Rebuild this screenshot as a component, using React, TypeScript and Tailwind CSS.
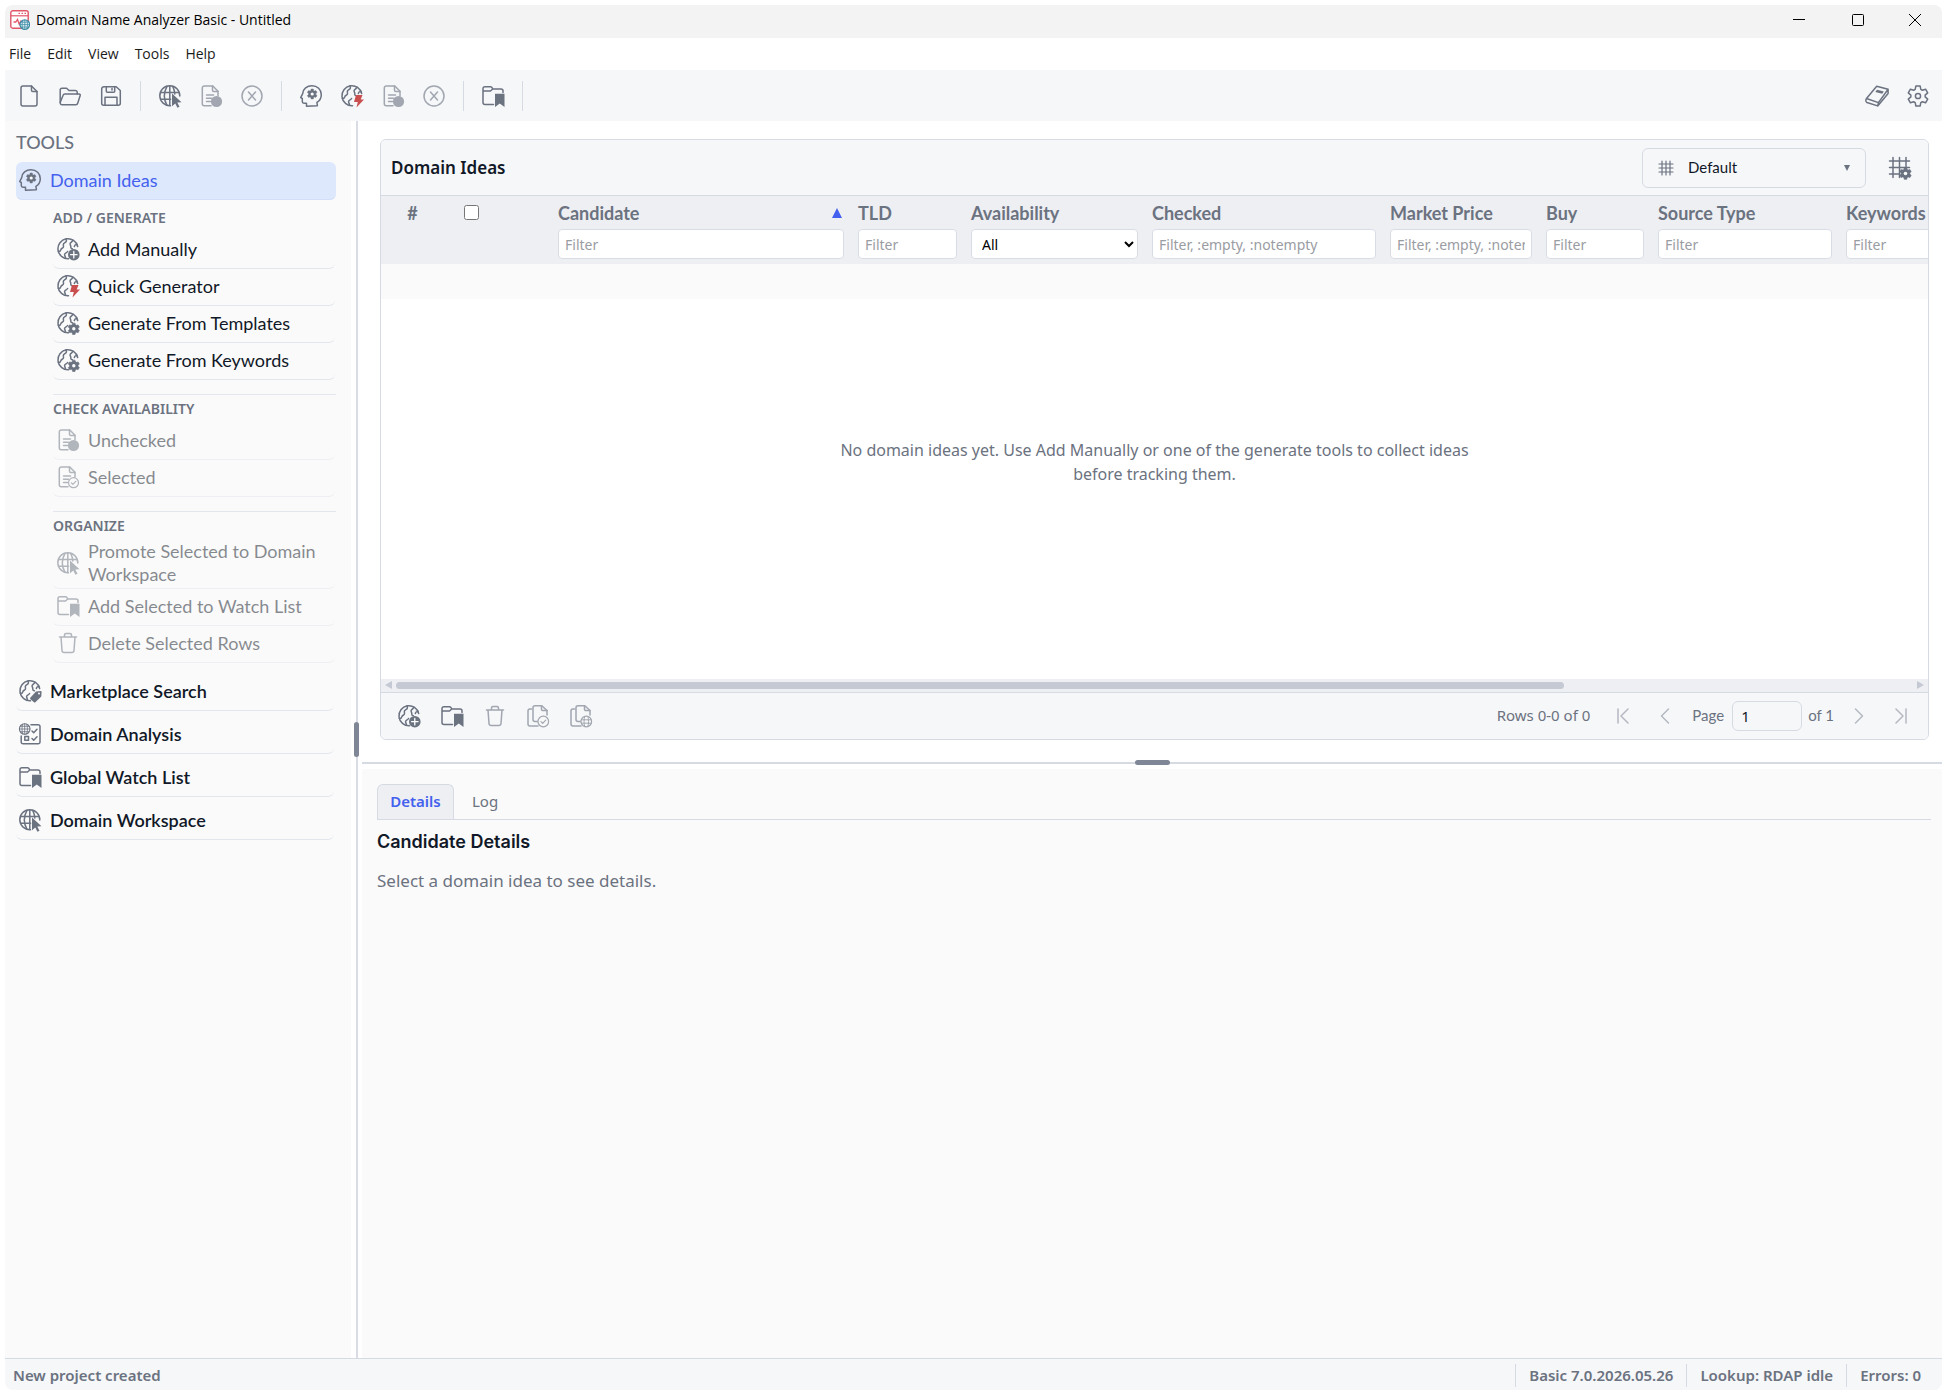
import React from "react";

type IconProps = { className?: string; size?: string };
type IconType = (props: IconProps) => React.JSX.Element;

// six-toothed gear outline around (cx, cy)
const gearPath = (cx: number, cy: number, outer: number, inner: number): string => {
  const points: string[] = [];
  for (let i = 0; i < 6; i++) {
    const mid = i * 60 - 90;
    const corners = [
      [mid - 23, inner],
      [mid - 12, outer],
      [mid + 12, outer],
      [mid + 23, inner],
    ];
    corners.forEach(([deg, r]) => {
      const a = (deg * Math.PI) / 180;
      points.push(`${(cx + r * Math.cos(a)).toFixed(2)} ${(cy + r * Math.sin(a)).toFixed(2)}`);
    });
  }
  return `M${points.join("L")}Z`;
};

const Svg = ({ className = "", size = "size-6", children }: IconProps & { children: React.ReactNode }) => (
  <svg
    viewBox="0 0 24 24"
    fill="none"
    stroke="currentColor"
    strokeWidth="1.5"
    strokeLinecap="round"
    strokeLinejoin="round"
    aria-hidden="true"
    className={`shrink-0 ${size} ${className}`}
  >
    {children}
  </svg>
);

const NewIcon: IconType = (p) => (
  <Svg {...p}>
    <path d="M6 2h8.500L20 7.500V20a2 2 0 0 1-2 2H6a2 2 0 0 1-2-2V4a2 2 0 0 1 2-2Z" />
    <path d="M14.500 2v4.200a1.300 1.300 0 0 0 1.300 1.300H20" />
  </Svg>
);

const OpenIcon: IconType = (p) => (
  <Svg {...p}>
    <path d="M2.200 18.500V6a1.800 1.800 0 0 1 1.800-1.800h4.600l2.400 2.300h6.400A1.800 1.800 0 0 1 19.200 8.300V10" />
    <path d="M6.800 10h14.300a1.200 1.200 0 0 1 1.100 1.600l-2.500 7.700a2 2 0 0 1-1.900 1.500H4.200a2 2 0 0 1-1.900-2.600l2.800-6.900A1.900 1.900 0 0 1 6.800 10Z" />
  </Svg>
);

const SaveIcon: IconType = (p) => (
  <Svg {...p}>
    <path d="M5 2.700h12.200L21.300 6.500V19.300a2 2 0 0 1-2 2H4.700a2 2 0 0 1-2-2V5A2.300 2.300 0 0 1 5 2.700Z" />
    <path d="M7.300 2.700v4.600a1 1 0 0 0 1 1h6.400a1 1 0 0 0 1-1V2.700M13 4.500v1.500M6 21.300v-8h12v8" />
  </Svg>
);

const GlobeCursorIcon: IconType = (p) => (
  <Svg {...p}>
    <path d="M12.500 21.700A10 10 0 1 1 21.800 12" />
    <path d="M2.600 8.500h18.200M2.600 15.300h10M11.800 1.800v19.800M9 2.300c-3.400 6-3.400 13 0 19M14.700 2.300c1.300 2.500 2 5 2.100 7.700" />
    <path d="M14 9.500l9.500 8.700-4.200.3 2.200 4.300-2.100 1-2.100-4.300L14 22.300Z" fill="currentColor" stroke="none" />
  </Svg>
);

const PageLines = () => (
  <>
    <path d="M12 21.800H5.300a2 2 0 0 1-2-2V4a2 2 0 0 1 2-2h8.500L19 7.300V12" />
    <path d="M13.500 2v4.200a1.300 1.300 0 0 0 1.300 1.300H19M7.500 11h7M7.500 14.300h5M7.500 17.600h4" />
  </>
);

const PageDotIcon: IconType = (p) => (
  <Svg {...p}>
    <PageLines />
    <circle cx="17.500" cy="17.500" r="5.600" fill="currentColor" stroke="none" />
  </Svg>
);

const PageCheckIcon: IconType = (p) => (
  <Svg {...p}>
    <PageLines />
    <circle cx="17.500" cy="17.700" r="5" className="fill-neutral-50" strokeWidth="1.200" />
    <path d="M15.300 17.800l1.600 1.600 2.900-3" strokeWidth="1.200" />
  </Svg>
);

const CancelIcon: IconType = (p) => (
  <Svg {...p}>
    <circle cx="12" cy="12" r="10" />
    <path d="M8.500 8l7 8M15.500 8l-7 8" />
  </Svg>
);

const HeadIcon: IconType = (p) => (
  <Svg {...p}>
    <path d="M7.500 22.300v-3H5a1.700 1.700 0 0 1-1.700-1.700v-3.100L1.700 13.600l2-4C4 4.800 8 1.700 13 1.700c5.400 0 9.300 3.900 9.300 9 0 3.600-1.800 6.100-4.400 7.700l.5 3.300Z" />
    <path d={gearPath(13.2, 10, 5, 3.6)} fill="currentColor" strokeWidth=".6" />
    <circle cx="13.200" cy="10" r="1.600" className="fill-neutral-50" stroke="none" />
  </Svg>
);

const EarthLines = () => (
  <>
    <path d="M12.500 21.700A10 10 0 1 1 21.700 9.500" />
    <path d="M2.300 14.500c1.600.2 2.300-.6 2.600-1.900s1.700-1.200 2.400-2.200-.5-2.600.3-3.700 2.300-1.200 2.700-2.500-.3-1.600-.3-2.200" />
    <path d="M9.300 21.300c.5-1.800-.9-2.400-.7-3.900s2.300-1.500 3-2.900" />
    <path d="M16.800 3.200c-.3 1.600-2 1.900-2.600 3.200s.8 2 .6 3.400.8 2 1.600 2M21 7.500c-1.500-.2-2.400.6-2.700 2" />
  </>
);

const EarthPlusIcon: IconType = (p) => (
  <Svg {...p}>
    <EarthLines />
    <circle cx="17.800" cy="17.700" r="5.800" fill="currentColor" stroke="none" />
    <path d="M17.800 14.500v6.400M14.600 17.700H21" stroke="#fff" strokeWidth="1.300" />
  </Svg>
);

const EarthBoltIcon: IconType = (p) => (
  <Svg {...p}>
    <EarthLines />
    <path d="M16 11h6.500l-1.800 4.500H24l-7.500 8 1.300-5.500h-3.800Z" fill="#c94f4f" stroke="none" />
  </Svg>
);

const EarthGearIcon: IconType = (p) => (
  <Svg {...p}>
    <EarthLines />
    <path d={gearPath(17.8, 17.8, 5.8, 4.3)} fill="currentColor" strokeWidth=".6" />
    <circle cx="17.800" cy="17.800" r="1.700" className="fill-neutral-50" stroke="none" />
  </Svg>
);

const EarthTagIcon: IconType = (p) => (
  <Svg {...p}>
    <EarthLines />
    <path d="M12.500 18.500l5.500-6 4.600-.6a1 1 0 0 1 1 1l-.3 4.600-5.700 5.500a1.300 1.300 0 0 1-1.900 0l-3.200-2.700a1.300 1.300 0 0 1 0-1.800Z" fill="currentColor" stroke="none" />
    <circle cx="21" cy="14.500" r="1" className="fill-neutral-50" stroke="none" />
  </Svg>
);

const FolderMarkIcon: IconType = (p) => (
  <Svg {...p}>
    <path d="M12.500 20.500H4a2 2 0 0 1-2-2V4.500A1.800 1.800 0 0 1 3.800 2.700h5.700a1.800 1.800 0 0 1 1.700 1.200l.5 1.100H20a2 2 0 0 1 2 2v1.500M2 7h7.500l2.200-2" />
    <path d="M14 9.800h9.500V23l-4.700-3.500L14 23Z" fill="currentColor" stroke="none" />
  </Svg>
);

const ChecklistIcon: IconType = (p) => (
  <Svg {...p}>
    <path d="M13 2.800h7.200a1.800 1.800 0 0 1 1.800 1.800V20a1.800 1.800 0 0 1-1.800 1.800H5A1.800 1.800 0 0 1 3.200 20v-6" />
    <path d="M14 9l1.700 1.700 3.300-3.400M14 16.500l1.700 1.700 3.300-3.400M6.800 14.500h3.700v3.700H6.800Z" />
    <circle cx="6.700" cy="7" r="5.300" strokeWidth="1.100" />
    <path d="M1.500 7h10.400M6.700 1.700v10.600M4.700 2.200c-1 3-1 6.600 0 9.600M8.700 2.200c1 3 1 6.600 0 9.600M2.500 4.300h8.400M2.500 9.700h8.400" strokeWidth=".8" />
  </Svg>
);

const TrashIcon: IconType = (p) => (
  <Svg {...p}>
    <path d="M3.500 6h17M8.500 6V4a1.600 1.600 0 0 1 1.600-1.600h3.800A1.600 1.600 0 0 1 15.500 4v2M5 6l1 13.500a2.200 2.200 0 0 0 2.200 2h7.600a2.200 2.200 0 0 0 2.200-2L19 6" />
  </Svg>
);

const CopyLines = () => (
  <>
    <path d="M5.500 5H4a2 2 0 0 0-2 2v13a2 2 0 0 0 2 2h8M12 17.500H9a2 2 0 0 1-2-2V3.700a2 2 0 0 1 2-2h6.800L21 6.500V11" />
    <path d="M15.500 1.700v3.500a1.300 1.300 0 0 0 1.300 1.300H21" />
  </>
);

const CopyCheckIcon: IconType = (p) => (
  <Svg {...p}>
    <CopyLines />
    <circle cx="17.300" cy="17.500" r="5.300" className="fill-neutral-50" strokeWidth="1.200" />
    <path d="M15 17.600l1.700 1.700 3-3.100" strokeWidth="1.200" />
  </Svg>
);

const CopyGlobeIcon: IconType = (p) => (
  <Svg {...p}>
    <CopyLines />
    <circle cx="17.300" cy="17.500" r="5.300" className="fill-neutral-50" strokeWidth="1.200" />
    <path d="M12.500 15.800h9.600M12.500 19.200h9.600M15.700 12.500c-.9 3-.9 7 0 10M18.900 12.500c.9 3 .9 7 0 10" strokeWidth="1" />
  </Svg>
);

const BookIcon: IconType = (p) => (
  <Svg {...p}>
    <path d="M1.500 14.500L11.700 2.200l11.400 3.100L13.400 18.600 1.500 14.500Zm0 0c-1 1.500-.9 3.300.4 4l10.800 3.400 10.400-12.500V5.300M13.400 18.600l-.7 3.300" />
    <path d="M12 5.800l6.800 1.700-1.600 2.300-6.900-1.700Z" fill="currentColor" stroke="none" />
  </Svg>
);

const GearIcon: IconType = (p) => (
  <Svg {...p}>
    <path d={gearPath(12, 12, 10.2, 7.2)} />
    <circle cx="12" cy="12" r="2.600" />
  </Svg>
);

const GridIcon: IconType = (p) => (
  <Svg {...p}>
    <path d="M6 1.500v21M12 1.500v21M18 1.500v21M1.500 6h21M1.500 12h21M1.500 18h21" strokeWidth="1.800" />
  </Svg>
);

const GridGearIcon: IconType = (p) => (
  <Svg {...p}>
    <path d="M5 1.500v20M11.500 1.500v20M18 1.500v9M1.500 5h20M1.500 11.500h20M1.500 18H11" />
    <path d={gearPath(17.5, 17.5, 6, 4.3)} fill="currentColor" strokeWidth=".6" />
    <circle cx="17.500" cy="17.500" r="1.800" className="fill-neutral-50" stroke="none" />
  </Svg>
);

const FirstIcon: IconType = (p) => (
  <Svg {...p}>
    <path d="M7 5v14M17 5l-7 7 7 7" />
  </Svg>
);
const PrevIcon: IconType = (p) => (
  <Svg {...p}>
    <path d="M15.500 5l-7 7 7 7" />
  </Svg>
);
const NextIcon: IconType = (p) => (
  <Svg {...p}>
    <path d="M8.500 5l7 7-7 7" />
  </Svg>
);
const LastIcon: IconType = (p) => (
  <Svg {...p}>
    <path d="M17 5v14M7 5l7 7-7 7" />
  </Svg>
);

const AppLogo = () => (
  <svg viewBox="0 0 20 20" fill="none" aria-hidden="true" className="size-5 shrink-0">
    <rect x=".8" y=".8" width="17.400" height="17.400" rx="2" fill="#fff" stroke="#e2566a" strokeWidth="1.400" />
    <path d="M1 5.800h17" stroke="#e2566a" strokeWidth="1.200" />
    <path d="M8.500 3.400h1.500M11.500 3.400H13M14.500 3.400H16" stroke="#e2566a" strokeWidth="1.300" />
    <path d="M3.500 12h2.300l1.700-2.500 1.800 5 1.700-4" stroke="#e2566a" strokeWidth="1.300" />
    <circle cx="14.800" cy="14.600" r="4.800" fill="#e3f2f6" stroke="#3f8ca6" strokeWidth="1.200" />
    <path d="M10 14.600h9.600M14.800 9.800v9.600M12.800 10.300c-.9 2.600-.9 6 0 8.600M16.800 10.300c.9 2.600.9 6 0 8.600M11 12.200h7.600M11 17h7.600" stroke="#3f8ca6" strokeWidth=".8" />
  </svg>
);

type Tool = { label: string; icon: IconType; disabled?: boolean };

const toolbarGroups: Tool[][] = [
  [
    { label: "New", icon: NewIcon },
    { label: "Open", icon: OpenIcon },
    { label: "Save", icon: SaveIcon },
  ],
  [
    { label: "Domain Workspace", icon: GlobeCursorIcon },
    { label: "Check unchecked domains", icon: PageDotIcon, disabled: true },
    { label: "Stop domain check", icon: CancelIcon, disabled: true },
  ],
  [
    { label: "Domain Ideas", icon: HeadIcon },
    { label: "Quick Generator", icon: EarthBoltIcon },
    { label: "Check unchecked ideas", icon: PageDotIcon, disabled: true },
    { label: "Stop idea check", icon: CancelIcon, disabled: true },
  ],
  [{ label: "Global Watch List", icon: FolderMarkIcon }],
];

const ideaGroups: { title: string; items: Tool[] }[] = [
  {
    title: "ADD / GENERATE",
    items: [
      { label: "Add Manually", icon: EarthPlusIcon },
      { label: "Quick Generator", icon: EarthBoltIcon },
      { label: "Generate From Templates", icon: EarthGearIcon },
      { label: "Generate From Keywords", icon: EarthGearIcon },
    ],
  },
  {
    title: "CHECK AVAILABILITY",
    items: [
      { label: "Unchecked", icon: PageDotIcon, disabled: true },
      { label: "Selected", icon: PageCheckIcon, disabled: true },
    ],
  },
  {
    title: "ORGANIZE",
    items: [
      { label: "Promote Selected to Domain Workspace", icon: GlobeCursorIcon, disabled: true },
      { label: "Add Selected to Watch List", icon: FolderMarkIcon, disabled: true },
      { label: "Delete Selected Rows", icon: TrashIcon, disabled: true },
    ],
  },
];

const sections: Tool[] = [
  { label: "Marketplace Search", icon: EarthTagIcon },
  { label: "Domain Analysis", icon: ChecklistIcon },
  { label: "Global Watch List", icon: FolderMarkIcon },
  { label: "Domain Workspace", icon: GlobeCursorIcon },
];

const columns = [
  { label: "Candidate", width: "w-[300px]", placeholder: "Filter", sorted: true },
  { label: "TLD", width: "w-[113px]", placeholder: "Filter" },
  { label: "Availability", width: "w-[181px]", select: true },
  { label: "Checked", width: "w-[238px]", placeholder: "Filter, :empty, :notempty" },
  { label: "Market Price", width: "w-[156px]", placeholder: "Filter, :empty, :notempty" },
  { label: "Buy", width: "w-[112px]", placeholder: "Filter" },
  { label: "Source Type", width: "w-[188px]", placeholder: "Filter" },
  { label: "Keywords", width: "w-[564px]", placeholder: "Filter" },
];

const footerTools: Tool[] = [
  { label: "Add manually", icon: EarthPlusIcon },
  { label: "Add to watch list", icon: FolderMarkIcon },
  { label: "Delete rows", icon: TrashIcon, disabled: true },
  { label: "Copy selected", icon: CopyCheckIcon, disabled: true },
  { label: "Copy domains", icon: CopyGlobeIcon, disabled: true },
];

const TitleBar = () => (
  <header className="flex h-[33px] shrink-0 items-center justify-between rounded-t-lg bg-[#f3f3f3] pb-1 pl-[5px] font-['Open_Sans',sans-serif]">
    <div className="flex items-center gap-1.5">
      <AppLogo />
      <h1 className="text-sm text-black">Domain Name Analyzer Basic - Untitled</h1>
    </div>
    <div className="flex text-black">
      <button aria-label="Minimize" className="flex h-7 w-[59px] items-center justify-center">
        <svg viewBox="0 0 12 12" stroke="currentColor" className="size-3"><path d="M0 5.500h12" /></svg>
      </button>
      <button aria-label="Maximize" className="flex h-7 w-[59px] items-center justify-center">
        <svg viewBox="0 0 12 12" fill="none" stroke="currentColor" className="size-3"><rect x=".5" y=".5" width="11" height="11" rx="1" /></svg>
      </button>
      <button aria-label="Close" className="flex h-7 w-[55px] items-center justify-center">
        <svg viewBox="0 0 12 12" stroke="currentColor" className="size-3"><path d="M0 0l12 12M12 0L0 12" /></svg>
      </button>
    </div>
  </header>
);

const MenuBar = () => (
  <nav className="flex h-8 shrink-0 items-center gap-4 px-1 font-['Open_Sans',sans-serif] text-sm text-[#1b1b1b]">
    {["File", "Edit", "View", "Tools", "Help"].map((item) => (
      <button key={item}>{item}</button>
    ))}
  </nav>
);

const ToolButton = ({ tool }: { tool: Tool }) => (
  <button
    aria-label={tool.label}
    disabled={tool.disabled}
    className="flex h-10 w-[41px] items-center justify-center text-[#6b7280] disabled:opacity-60"
  >
    <tool.icon />
  </button>
);

const Toolbar = () => (
  <div className="flex h-[51px] shrink-0 items-center justify-between bg-[#f6f7f9] pr-1 pl-[3px]">
    <div className="flex items-center">
      {toolbarGroups.map((group, i) => (
        <div key={i} className="flex items-center">
          {group.map((tool) => (
            <ToolButton key={tool.label} tool={tool} />
          ))}
          <span className="mr-2 ml-[9px] h-[30px] w-px bg-[#d5dae3]" />
        </div>
      ))}
    </div>
    <div className="flex items-center">
      <ToolButton tool={{ label: "Help book", icon: BookIcon }} />
      <ToolButton tool={{ label: "Settings", icon: GearIcon }} />
    </div>
  </div>
);

const Sidebar = () => (
  <aside className="flex w-[346px] shrink-0 flex-col bg-[#fafafa] pr-[15px] pl-[11px] font-[Lato,sans-serif] text-lg">
    <h2 className="flex h-[41px] items-center font-medium text-[#6b7280]">TOOLS</h2>
    <button className="flex h-[38px] items-center gap-2 rounded-md border-b border-[#d3dff8] bg-[#dde8fd] pb-0.5 pl-0.5 text-[#4361ee]">
      <HeadIcon className="text-[#6b7280]" />
      Domain Ideas
    </button>
    <div className="mt-1 ml-[37px] flex flex-col">
      {ideaGroups.map((group, i) => (
        <section key={group.title} className={i > 0 ? "mt-3.5 border-t border-[#e3e6ec]" : ""}>
          <h3 className="flex h-7 items-center font-['Noto_Sans',sans-serif] text-sm font-semibold text-[#6b7280]">
            {group.title}
          </h3>
          {group.items.map((item) => (
            <button
              key={item.label}
              disabled={item.disabled}
              className="flex min-h-[37px] w-[282px] items-center gap-2 rounded-md border-b border-[#e3e6ec] pb-0.5 pl-[3px] text-left leading-[23px] text-[#111827] disabled:opacity-50"
            >
              <item.icon className="text-[#6b7280]" />
              {item.label}
            </button>
          ))}
        </section>
      ))}
    </div>
    <div className="mt-[5px] flex flex-col pr-0.5">
      {sections.map((item) => (
        <button
          key={item.label}
          className="flex h-[43px] items-center gap-2 rounded-md border-b border-[#e3e6ec] pt-1 pl-0.5 text-left font-semibold text-[#111827]"
        >
          <item.icon className="text-[#6b7280]" />
          {item.label}
        </button>
      ))}
    </div>
  </aside>
);

const fieldClass =
  "mt-[5px] block h-[30px] w-full rounded-sm border border-[#d8dde5] bg-white font-['Noto_Sans',sans-serif] text-sm font-normal";

const IdeasTable = () => (
  <div className="relative flex min-h-0 flex-1 flex-col overflow-hidden">
    <table className="w-[2022px] table-fixed border-collapse text-left">
      <thead className="bg-[#eeeff3] align-top font-[Lato,sans-serif] text-lg text-[#6b7280]">
        <tr>
          <th className="w-[63px] pt-[5px] text-center leading-6">#</th>
          <th className="w-[107px] pt-[5px] pl-5">
            <input type="checkbox" aria-label="Select all rows" className="mt-1 block size-[15px]" />
          </th>
          {columns.map((col) => (
            <th key={col.label} className={`${col.width} px-[7px] pt-1.5 pb-[5px] leading-6`}>
              <span className="flex h-[22px] items-center justify-between pr-0.5">
                {col.label}
                {col.sorted && (
                  <svg viewBox="0 0 10 10" className="size-2.5 fill-[#4361ee]"><path d="M5 0l5 10H0Z" /></svg>
                )}
              </span>
              {col.select ? (
                <select aria-label={`${col.label} filter`} className={`${fieldClass} px-1.5 text-black`}>
                  <option>All</option>
                </select>
              ) : (
                <input
                  aria-label={`${col.label} filter`}
                  placeholder={col.placeholder}
                  className={`${fieldClass} px-1.5 placeholder:text-[#9a9ca3]`}
                />
              )}
            </th>
          ))}
        </tr>
      </thead>
      <tbody>
        <tr className="h-[35px] bg-[#fafafa]">
          <td colSpan={10} />
        </tr>
      </tbody>
    </table>
    <div className="flex flex-1 items-center justify-center pb-[54px]">
      <p className="max-w-[660px] text-center text-base text-[#6b7280]">
        No domain ideas yet. Use Add Manually or one of the generate tools to collect ideas before tracking them.
      </p>
    </div>
    <div className="flex h-[13px] shrink-0 items-center gap-1 bg-[#eeeff3] px-1">
      <svg viewBox="0 0 7 8" className="h-2 w-[7px] fill-[#c5c9d3]"><path d="M7 0v8L0 4Z" /></svg>
      <div className="flex-1">
        <div className="h-[7px] w-[77%] rounded-full bg-[#c5c9d3]" />
      </div>
      <svg viewBox="0 0 7 8" className="h-2 w-[7px] fill-[#c5c9d3]"><path d="M0 0v8l7-4Z" /></svg>
    </div>
  </div>
);

const PagerButton = ({ label, icon: Icon }: { label: string; icon: IconType }) => (
  <button aria-label={label} disabled className="flex h-8 w-[42px] items-center justify-center text-[#b4b8c1]">
    <Icon />
  </button>
);

const IdeasPanel = () => (
  <section className="mt-[18px] mr-[13px] mb-[17px] ml-[18px] flex min-h-0 flex-1 flex-col overflow-hidden rounded-md border border-[#d5dae3] bg-white">
    <div className="flex h-14 shrink-0 items-center justify-between border-b border-[#d5dae3] bg-[#f6f7f9] pr-2 pl-2.5">
      <h2 className="text-[17px] font-semibold text-[#111827]">Domain Ideas</h2>
      <div className="flex items-center gap-3.5">
        <button className="flex h-10 w-56 items-center rounded-md border border-[#d5dae3] px-[15px] font-[Lato,sans-serif] text-[15px] text-[#111827]">
          <GridIcon size="size-4" className="mr-3.5 text-[#6b7280]" />
          Default
          <svg viewBox="0 0 6 6" className="ml-auto size-1.5 fill-[#6b7280]"><path d="M0 0h6L3 6Z" /></svg>
        </button>
        <button aria-label="Grid settings" className="flex size-10 items-center justify-center text-[#6b7280]">
          <GridGearIcon />
        </button>
      </div>
    </div>
    <IdeasTable />
    <div className="flex h-[47px] shrink-0 items-center justify-between border-t border-[#d5dae3] bg-[#f6f7f9] px-1.5 text-[#6b7280]">
      <div className="flex">
        {footerTools.map((tool) => (
          <button
            key={tool.label}
            aria-label={tool.label}
            disabled={tool.disabled}
            className="flex h-8 w-[43px] items-center justify-center disabled:opacity-60"
          >
            <tool.icon />
          </button>
        ))}
      </div>
      <div className="flex items-center text-[15px]">
        <span className="mr-3">Rows 0-0 of 0</span>
        <PagerButton label="First page" icon={FirstIcon} />
        <PagerButton label="Previous page" icon={PrevIcon} />
        <label className="ml-1.5 flex items-center gap-2 font-[Lato,sans-serif]">
          Page
          <input
            defaultValue="1"
            className="h-[30px] w-[70px] rounded-md border border-[#d5dae3] px-2 font-['Noto_Sans',sans-serif] text-[#111827]"
          />
        </label>
        <span className="mr-1 ml-1.5 font-[Lato,sans-serif]">of 1</span>
        <PagerButton label="Next page" icon={NextIcon} />
        <PagerButton label="Last page" icon={LastIcon} />
      </div>
    </div>
  </section>
);

const DetailsPane = () => (
  <section className="min-h-0 flex-[574] bg-[#fafafa] pt-[15px] pr-[11px] pl-[15px]">
    <div role="tablist" className="flex h-9 border-b border-[#d5dae3] text-[15px] text-[#6b7280]">
      <button
        role="tab"
        aria-selected="true"
        className="w-[77px] rounded-t-md border border-b-0 border-[#d5dae3] bg-[#eeeff3] font-semibold text-[#4361ee]"
      >
        Details
      </button>
      <button role="tab" aria-selected="false" className="px-[18px]">
        Log
      </button>
    </div>
    <h2 className="mt-2 font-[Inter,sans-serif] text-lg font-semibold text-[#111827]">Candidate Details</h2>
    <p className="mt-3 text-[17px] text-[#6b7280]">Select a domain idea to see details.</p>
  </section>
);

const StatusBar = () => (
  <footer className="flex h-8 shrink-0 items-center justify-between rounded-b-lg border-t border-[#d5dae3] bg-[#f6f7f9] px-2 pt-0.5 text-[15px] font-semibold text-[#6b7280]">
    <span>New project created</span>
    <div className="flex items-center">
      {["Basic 7.0.2026.05.26", "Lookup: RDAP idle", "Errors: 0"].map((text) => (
        <span key={text} className="border-l border-[#d5dae3] px-[13px]">
          {text}
        </span>
      ))}
    </div>
  </footer>
);

export default function App() {
  return (
    <div className="h-screen bg-white px-[5px] pt-[5px] pb-0.5 font-['Noto_Sans',sans-serif]">
      <div className="flex h-full flex-col">
        <TitleBar />
        <MenuBar />
        <Toolbar />
        <div className="flex min-h-0 flex-1">
          <Sidebar />
          <div className="flex w-[11px] shrink-0 flex-col items-center">
            <div className="w-0.5 flex-1 bg-[#d9dce4]" />
            <div className="h-[35px] w-[5px] rounded-full bg-[#7f8695]" />
            <div className="w-0.5 flex-1 bg-[#d9dce4]" />
          </div>
          <main className="flex min-w-0 flex-1 flex-col">
            <div className="flex min-h-0 flex-[635] flex-col">
              <IdeasPanel />
            </div>
            <div className="flex h-3 shrink-0 items-center">
              <div className="h-0.5 flex-1 bg-[#d5dae3]" />
              <div className="h-[5px] w-[35px] rounded-full bg-[#7f8695]" />
              <div className="h-0.5 flex-1 bg-[#d5dae3]" />
            </div>
            <DetailsPane />
          </main>
        </div>
        <StatusBar />
      </div>
    </div>
  );
}
